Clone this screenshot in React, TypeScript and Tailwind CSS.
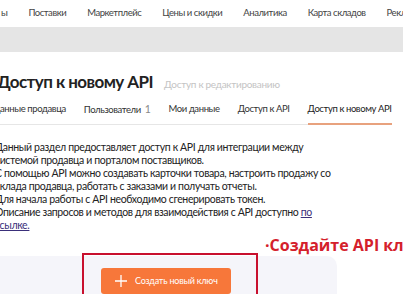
import React from "react";

const navItems = ["ы", "Поставки", "Маркетплейс", "Цены и скидки", "Аналитика", "Карта складов", "Реклама"];
const tabs = ["Данные продавца", "Пользователи", "Мои данные", "Доступ к API", "Доступ к новому API"];

const App: React.FC = () => {
  return (
    <div className="relative w-[403px] h-[294px] overflow-hidden bg-white font-['Lato',sans-serif] text-[#333]">
      <nav className="h-[27px] flex items-center gap-[21px] pl-[1px] whitespace-nowrap text-[9.5px] tracking-[-0.45px] text-[#444]">
        {navItems.map((item) => (
          <span key={item}>{item}</span>
        ))}
      </nav>
      <div className="h-[25px] bg-[#e5e5e5]"></div>

      <div className="-ml-[3px] pt-[18px] flex items-baseline gap-[11px] whitespace-nowrap">
        <h1 className="text-[17px] leading-[24px] font-bold tracking-[-0.55px] text-[#222]">Доступ к новому API</h1>
        <span className="text-[10px] tracking-[-0.3px] text-[#c4c4c4]">Доступ к редактированию</span>
      </div>

      <div className="-ml-[7px] mt-[8px] w-[397px] flex gap-[18px] whitespace-nowrap border-b border-[#e6e6e6] text-[9.5px] tracking-[-0.4px] leading-[14px]">
        {tabs.map((tab, i) => (
          <div
            key={tab}
            className={
              "pb-[6px] -mb-px border-b-2 " +
              (i === tabs.length - 1 ? "border-[#e8a27e] text-[#222]" : "border-transparent text-[#333]")
            }
          >
            {tab}
            {tab === "Пользователи" && <span className="ml-[4px] text-[10.5px] text-[#888]">1</span>}
          </div>
        ))}
      </div>

      <div className="-ml-[5px] mt-[16px] whitespace-nowrap text-[10.5px] tracking-[-0.35px] leading-[13px] text-[#222]">
        <p>
          Данный раздел предоставляет доступ к API для интеграции между
          <br />
          системой продавца и порталом поставщиков.
        </p>
        <p>
          С помощью API можно создавать карточки товара, настроить продажу со
          <br />
          склада продавца, работать с заказами и получать отчеты.
        </p>
        <p>Для начала работы с API необходимо сгенерировать токен.</p>
        <p>
          Описание запросов и методов для взаимодействия с API доступно{" "}
          <a className="underline text-[#3a2f7a]">по</a>
          <br />
          <a className="underline text-[#3a2f7a]">ссылке.</a>
        </p>
      </div>

      <div className="pl-[265px] mt-[2px] h-[22px] whitespace-nowrap font-['Open_Sans',sans-serif] font-bold text-[16px] leading-[22px] text-[#d4202b]">
        ·Создайте API ключ
      </div>

      <div className="relative w-[403px] border-b border-[#dcdcdc]">
        <div className="w-[337px] h-[38px] bg-[#f5f5fa] rounded-tr-[10px] pt-[12px] pl-[101px]">
          <button className="h-[26px] w-[130px] rounded-[3px] bg-[#f7773a] flex items-center gap-[8px] pl-[14px] text-white text-[9px] tracking-[-0.2px]">
            <svg width="12" height="12" viewBox="0 0 12 12" fill="none" stroke="white" strokeWidth="1.3">
              <path d="M6 0v12M0 6h12" />
            </svg>
            Создать новый ключ
          </button>
        </div>
      </div>

      <div className="absolute left-[82px] top-[253px] w-[176px] h-[50px] border-2 border-[#c8102e]"></div>
    </div>
  );
};

export default App;
